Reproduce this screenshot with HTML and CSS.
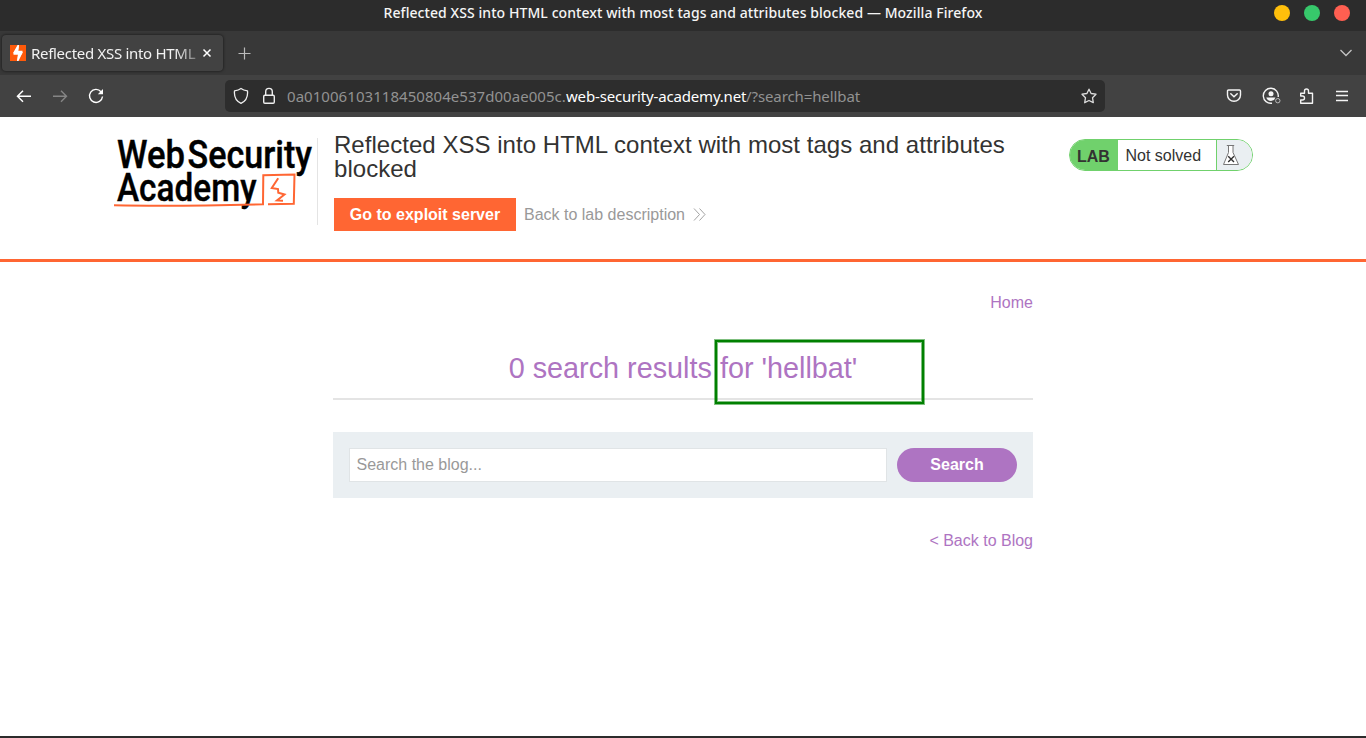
FILE: index.html
```html
<!DOCTYPE html>
<html lang="en">
<head>
<meta charset="utf-8">
<title>Reflected XSS into HTML context with most tags and attributes blocked</title>
<link rel="stylesheet" href="styles.css">
</head>
<body>
<div class="window">
  <div class="titlebar">
    <span class="title-text">Reflected XSS into HTML context with most tags and attributes blocked — Mozilla Firefox</span>
    <div class="controls"><i class="dot yellow"></i><i class="dot green"></i><i class="dot red"></i></div>
  </div>
  <div class="tabs">
    <div class="tab">
      <svg class="favicon" width="16" height="16" viewBox="0 0 16 16"><rect width="16" height="16" fill="#ff5a0a"/><path d="M9 0L3 8.200H7.200L8.200 5.200Z M7.300 16L12.900 7.200H8.700L7.900 10.300Z" fill="#fff"/><path d="M7.600 0H9L8.300 5.700H12.500V7.800L8.500 16H7L8 9.800H3.500V7.300Z" fill="#fff"/></svg>
      <span class="tab-label">Reflected XSS into HTML</span>
      <svg class="close" width="10" height="10" viewBox="0 0 10 10"><path d="M1.500 1.500L8.500 8.500M8.500 1.500L1.500 8.500" stroke="#fff" stroke-width="1.500"/></svg>
    </div>
    <svg class="plus" width="14" height="14" viewBox="0 0 14 14"><path d="M7.500 1.500V13.500M1.500 7.500H13.500" stroke="#bbb" stroke-width="1.200"/></svg>
    <svg class="chevron" width="14" height="10" viewBox="0 0 14 10"><path d="M1.500 2L7 7.500L12.500 2" fill="none" stroke="#c4c4c4" stroke-width="1.300"/></svg>
  </div>
  <div class="toolbar">
    <div class="nav">
      <svg width="16" height="16" viewBox="0 0 16 16"><path d="M15 8.300H1.800M7 2.800L1.500 8.300L7 13.800" fill="none" stroke="#fff" stroke-width="1.500"/></svg>
      <svg width="16" height="16" viewBox="0 0 16 16"><path d="M1 8.300H14.200M9 2.800L14.500 8.300L9 13.800" fill="none" stroke="#858585" stroke-width="1.400"/></svg>
      <svg width="16" height="16" viewBox="0 0 16 16"><path d="M13 3.700A6.500 6.500 0 1 0 14.500 8.500" fill="none" stroke="#fff" stroke-width="1.400"/><path d="M15 1V6.200H9.800Z" fill="#fff"/></svg>
    </div>
    <div class="address">
      <svg width="16" height="18" viewBox="0 0 16 18"><path d="M8 1.500C6 3.100 3.700 3.600 1.500 3.900C1 9 2.600 13.900 8 16.400C13.400 13.900 15 9 14.500 3.900C12.300 3.600 10 3.100 8 1.500Z" fill="none" stroke="#eee" stroke-width="1.300" stroke-linejoin="round"/></svg>
      <svg class="lock" width="14" height="18" viewBox="0 0 14 18"><rect x="1.700" y="8.200" width="10.600" height="8" rx="1.200" fill="none" stroke="#eee" stroke-width="1.400"/><path d="M3.700 8V4.700A3.300 3.300 0 0 1 10.300 4.700V8" fill="none" stroke="#eee" stroke-width="1.400"/></svg>
      <div class="url"><span class="u1">0a01006103118450804e537d00ae005c.</span><span class="u2">web-security-academy.net</span><span class="u3">/?search=hellbat</span></div>
      <svg class="star" width="16" height="16" viewBox="0 0 16 16"><path d="M8 1.200L10.100 5.500L15 6.200L11.500 9.700L12.300 14.700L8 12.500L3.700 14.700L4.500 9.700L1 6.200L5.900 5.500Z" fill="none" stroke="#ddd" stroke-width="1.300" stroke-linejoin="round"/></svg>
    </div>
    <div class="tools">
      <svg width="16" height="16" viewBox="0 0 16 16"><path d="M2.500 2H13.500Q14.500 2 14.500 3V7A6.500 6.200 0 0 1 1.500 7V3Q1.500 2 2.500 2Z" fill="none" stroke="#f4f4f4" stroke-width="1.400"/><path d="M4.800 5.800L8 8.800L11.200 5.800" fill="none" stroke="#f4f4f4" stroke-width="1.500" stroke-linecap="round"/></svg>
      <svg width="19" height="18" viewBox="0 0 19 18"><path d="M10 16.200A7.500 7.500 0 1 1 16.200 10" fill="none" stroke="#f4f4f4" stroke-width="1.400"/><circle cx="9" cy="6.700" r="2.500" fill="#f4f4f4"/><path d="M4.300 10.500H13.500L12 13L9 14C6.500 14 4.900 12.700 4.300 10.500Z" fill="#f4f4f4"/><circle cx="15.800" cy="13.700" r="2.200" fill="#424242" stroke="#bbb"/></svg>
      <svg class="puzzle" width="16" height="18" viewBox="0 0 16 18"><path d="M2 6.200H5.500V4A2 2 0 0 1 9.500 4V6.200H13.500V16.300H1.700V13H3.500A2 2 0 0 0 3.500 9H1.700V6.200Z" fill="none" stroke="#f4f4f4" stroke-width="1.400" stroke-linejoin="round"/></svg>
      <svg width="14" height="14" viewBox="0 0 14 14"><path d="M1 2.500H13M1 6.500H13M1 11.500H13" stroke="#f4f4f4" stroke-width="1.300"/></svg>
    </div>
  </div>
  <header class="lab-header">
    <svg class="logo" width="204" height="80" viewBox="0 0 204 80">
      <g class="logo-text"><text x="3" y="30" textLength="68" lengthAdjust="spacingAndGlyphs">Web</text><text x="73.500" y="30" textLength="124.500" lengthAdjust="spacingAndGlyphs">Security</text><text x="3" y="62.500" textLength="139.500" lengthAdjust="spacingAndGlyphs">Academy</text></g>
      <path d="M0 67.200Q60 68.500 149 66.200L149 65.500L149.300 37.300L180.500 36.500L179.800 65.800L154 66.300M164.200 40.300L157.800 50L164 51L164.300 54.700L170.500 56.500L163 62.500L169 62.800" fill="none" stroke="#ff6633" stroke-width="2"/>
    </svg>
    <div class="lab-main">
      <h2>Reflected XSS into HTML context with most tags and attributes blocked</h2>
      <div class="lab-links"><a class="exploit">Go to exploit server</a><a class="back">Back to lab description</a><svg width="13" height="13" viewBox="0 0 13 13"><path d="M1 .5L6.500 6.500L1 12.500M6.500 .5L12 6.500L6.500 12.500" fill="none" stroke="#999" stroke-width=".9"/></svg></div>
    </div>
    <div class="status"><b>LAB</b><span>Not solved</span><div class="flask"><svg width="18" height="22" viewBox="0 0 18 22"><path d="M4.800 1.500H12.200M6.500 1.500V8.500L1.500 20.500H16.500L11 8.500V1.500" fill="#fff" stroke="#777" stroke-width="1"/><path d="M6.200 12.200L12 18M12 12.200L6.200 18" stroke="#333" stroke-width="1.400"/></svg></div></div>
  </header>
  <main class="content">
    <a class="home">Home</a>
    <div class="results"><h1>0 search results for 'hellbat'</h1><div class="marker"></div></div>
    <div class="search"><input type="text" placeholder="Search the blog..."><button>Search</button></div>
    <a class="blog-back">&lt; Back to Blog</a>
  </main>
</div>
</body>
</html>
```
FILE: styles.css
```css
* { box-sizing: border-box; }
body { margin: 0; font: 16px/20px "Liberation Sans", Arial, sans-serif; color: #333332; background: #fff; }
svg { display: block; flex: none; }
.window { height: 738px; overflow: hidden; border-bottom: 2px solid #2c2c2c; display: flex; flex-direction: column; }
.titlebar, .tabs, .toolbar { font-family: "Noto Sans", "Open Sans", sans-serif; flex: none; }
.titlebar { height: 31px; background: #2c2c2c; display: grid; grid-template-columns: 1fr auto 1fr; align-items: start; color: #f5f5f5; padding: 3px 16px 0; }
.title-text { grid-column: 2; font-size: 14px; font-weight: 500; white-space: nowrap; letter-spacing: .075px; }
.controls { display: flex; gap: 14px; justify-content: flex-end; padding-top: 2px; margin-right: 0; }
.dot { width: 16px; height: 16px; border-radius: 50%; }
.yellow { background: #ffbf0b; }
.green { background: #37c86b; }
.red { background: #ff5f51; }
.tabs { height: 44px; background: #383838; display: flex; align-items: center; padding: 0 20px 0 2px; }
.tab { width: 221px; height: 36px; margin-top: -1px; border-radius: 4px; background: #424242; box-shadow: 0 0 3px rgba(0,0,0,.7); display: flex; align-items: center; padding: 0 11px 0 8px; }
.tab-label { width: 166px; margin-left: 5px; white-space: nowrap; font-size: 15px; letter-spacing: -.3px; color: #f2f2f2; -webkit-mask-image: linear-gradient(90deg, #000 145px, transparent 175px); mask-image: linear-gradient(90deg, #000 145px, transparent 175px); }
.close { margin-left: 5px; }
.plus { margin-left: 14px; }
.chevron { margin-left: auto; margin-right: -7px; }
.toolbar { height: 42px; background: #424242; display: flex; align-items: center; }
.nav { width: 225px; padding-left: 16px; display: flex; gap: 20px; }
.address { width: 880px; height: 32px; border-radius: 5px; background: #2d2d2d; display: flex; align-items: center; padding: 0 8px; }
.lock { margin-left: 13px; }
.url { display: flex; margin-left: 11px; font-size: 15px; white-space: nowrap; color: #929292; }
.u1 { width: 279px; letter-spacing: .05px; }
.u2 { width: 180px; color: #fff; letter-spacing: -.17px; }
.u3 { letter-spacing: -.1px; }
.star { margin-left: auto; }
.tools { flex: 1; display: flex; align-items: center; justify-content: space-between; padding: 0 17px 0 121px; }
.puzzle { margin-left: -2px; }
.lab-header { height: 145px; flex: none; border-bottom: 3px solid #ff6633; display: flex; padding: 21px 113px 0 114px; }
.logo { overflow: visible; }
.logo-text { font: 500 38px Roboto, sans-serif; fill: #000; stroke: #000; stroke-width: .4px; }
.lab-main { width: 716px; margin-top: 0; height: 87px; border-left: 1px solid #e4e4e4; margin-left: -1px; padding-left: 16px; }
h2 { margin: -5px 0 17px; font-size: 24px; line-height: 24px; font-weight: 400; letter-spacing: .035px; }
.lab-links { display: flex; align-items: center; color: #999; }
.exploit { background: #ff6633; color: #fff; font-weight: 700; width: 182px; height: 33px; line-height: 33px; text-align: center; margin-right: 8px; }
.lab-links svg { margin-left: 8px; }
.status { margin: 1px 0 0 auto; width: 184px; height: 32px; border: 1px solid #70d16c; border-radius: 16px; display: flex; overflow: hidden; line-height: 32px; }
.status b { width: 48px; background: #70d16c; padding-left: 7px; line-height: 34px; }
.status span { width: 98px; padding-left: 7.5px; }
.flask { flex: 1; background: #eaeff2; border-left: 1px solid #70d16c; padding: 4px 5px; }
.content { width: 700px; margin: 0 auto; padding-top: 31px; display: flex; flex-direction: column; color: #ae74c2; }
.home, .blog-back { align-self: flex-end; }
.results { position: relative; height: 87px; border-bottom: 2px solid #e4e4e4; text-align: center; }
h1 { margin: 0; padding-top: 37px; font-size: 28.8px; line-height: 36px; font-weight: 400; }
.marker { position: absolute; left: 382px; top: 27px; width: 209px; height: 64px; border: 2px solid #008000; box-shadow: 0 0 0 1px rgba(0,128,0,.5), inset 0 0 0 1px rgba(0,128,0,.5); }
.search { height: 66px; margin: 32px 0 33px; padding: 16px; background: #eaeff2; display: flex; gap: 10px; }
.search input { width: 538px; height: 34px; border: 1px solid #e0e4e6; padding: 0 6.500px; font: inherit; outline: none; }
.search input::placeholder { color: #999; opacity: 1; }
.search button { width: 120px; height: 34px; border: 0; border-radius: 17px; background: #ae74c2; color: #fff; font: bold 16px "Liberation Sans", Arial, sans-serif; }
```
